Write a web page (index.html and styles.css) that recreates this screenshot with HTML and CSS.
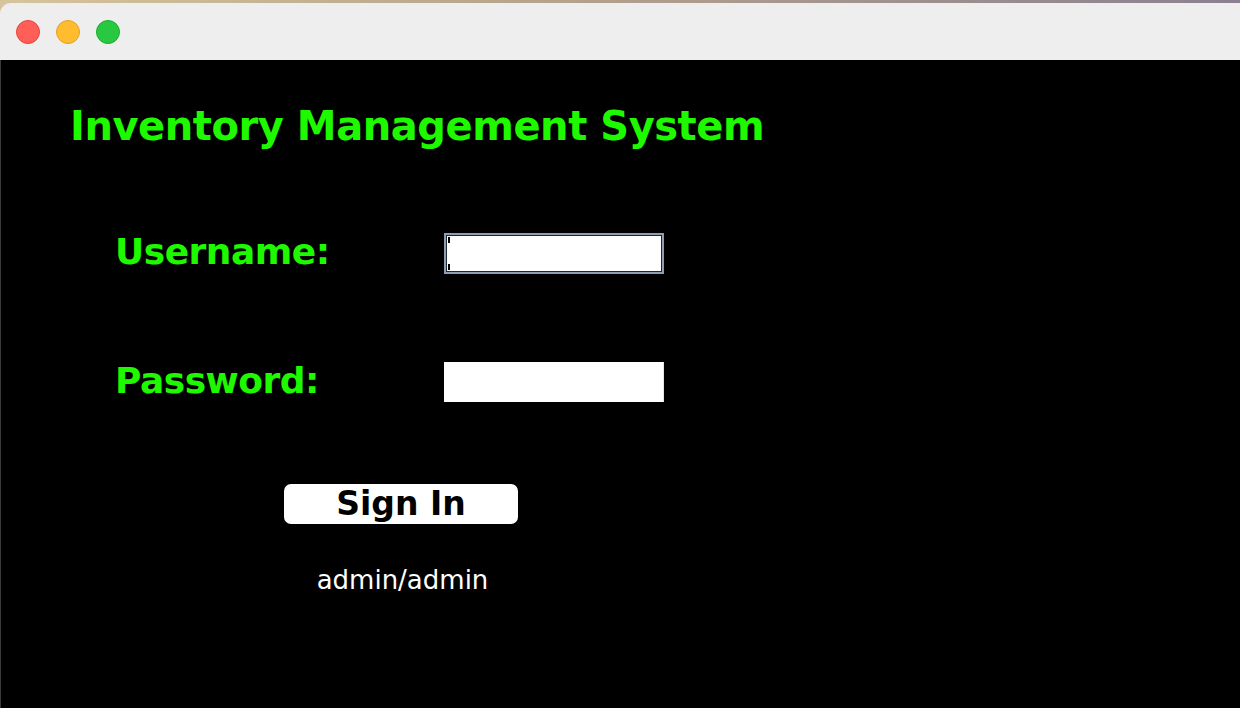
FILE: index.html
```html
<!DOCTYPE html>
<html lang="en">
<head>
<meta charset="utf-8">
<title>Inventory Management System</title>
<link rel="stylesheet" href="styles.css">
</head>
<body>
<div class="desktop">
  <div class="window">
    <div class="titlebar">
      <span class="light red"></span>
      <span class="light yellow"></span>
      <span class="light green"></span>
    </div>
    <div class="content">
      <h1 class="title">Inventory Management System</h1>
      <div class="form">
        <div class="row">
          <label class="label">Username:</label>
          <div class="field focused"><span class="caret top"></span><span class="caret bottom"></span></div>
        </div>
        <div class="row row-pass">
          <label class="label">Password:</label>
          <div class="field"></div>
        </div>
      </div>
      <div class="actions">
        <button class="signin">Sign In</button>
        <p class="hint">admin/admin</p>
      </div>
    </div>
  </div>
</div>
</body>
</html>
```
FILE: styles.css
```css
html, body {
  margin: 0;
  padding: 0;
  height: 100%;
  overflow: hidden;
}
body {
  font-family: "DejaVu Sans", "Liberation Sans", sans-serif;
}
.desktop {
  height: 708px;
  width: 1240px;
  background: linear-gradient(90deg, #d6c49c 0%, #b9a58c 40%, #8a8090 100%);
  padding-top: 3px;
  box-sizing: border-box;
}
.window {
  height: 705px;
  display: flex;
  flex-direction: column;
  border-top-left-radius: 11px;
  overflow: hidden;
}
.titlebar {
  height: 57px;
  flex: none;
  background: #eeeeee;
  display: flex;
  align-items: center;
  gap: 16px;
  padding-left: 16px;
  padding-top: 1px;
  box-sizing: border-box;
}
.light {
  width: 24px;
  height: 24px;
  border-radius: 50%;
  box-sizing: border-box;
}
.red { background: #ff5f57; border: 1px solid #e2463f; }
.yellow { background: #febc2e; border: 1px solid #e1a325; }
.green { background: #28c840; border: 1px solid #1dac2c; }
.content {
  flex: 1;
  background: #000;
  border-left: 1px solid #3a3a3a;
  display: flex;
  flex-direction: column;
  align-items: flex-start;
}
.title {
  margin: 46px 0 0 69px;
  font-size: 40px;
  line-height: 40px;
  letter-spacing: -0.45px;
  font-weight: bold;
  color: #1ef900;
}
.form {
  margin: 87px 0 0 114px;
  display: flex;
  flex-direction: column;
  gap: 88px;
}
.row {
  display: flex;
  align-items: flex-start;
}
.label {
  width: 329px;
  font-size: 36px;
  line-height: 37px;
  letter-spacing: -0.5px;
  font-weight: bold;
  color: #1ef900;
}
.field {
  width: 220px;
  height: 40px;
  background: #fff;
  position: relative;
  box-sizing: border-box;
}
.field.focused {
  height: 41px;
  border: 2px solid #8e9db3;
  box-shadow: inset 0 0 0 1px #1d2633;
}
.row-pass .field {
  border-right: 1px solid #e6e6e6;
}
.caret {
  position: absolute;
  left: 2px;
  width: 2px;
  height: 6px;
  background: #000;
}
.caret.top { top: 2px; }
.caret.bottom { bottom: 2px; }
.actions {
  margin: 82px 0 0 283px;
  width: 234px;
  display: flex;
  flex-direction: column;
  align-items: center;
}
.signin {
  width: 234px;
  height: 40px;
  border: none;
  border-radius: 7px;
  background: #fff;
  color: #000;
  font-family: "DejaVu Sans", "Liberation Sans", sans-serif;
  font-weight: bold;
  font-size: 33px;
  line-height: 40px;
  padding: 0;
}
.hint {
  margin: 43px 0 0 3px;
  font-size: 26px;
  line-height: 26px;
  color: #fff;
}
```
